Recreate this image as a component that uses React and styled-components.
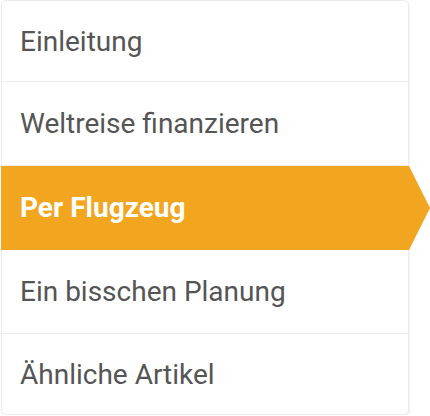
import React from "react";
import styled, { createGlobalStyle } from "styled-components";

const GlobalStyle = createGlobalStyle`
  html, body {
    margin: 0;
    padding: 0;
    background: #ffffff;
  }
  body {
    font-family: Roboto, "Liberation Sans", Arial, sans-serif;
  }
`;

const Menu = styled.nav`
  margin-left: 1px;
  width: 408px;
  box-sizing: border-box;
  border: 1px solid #ececec;
  border-radius: 5px;
  box-shadow: 1px 1px 2px rgba(0, 0, 0, 0.06);
  background: #ffffff;
  display: flex;
  flex-direction: column;
`;

const Item = styled.a`
  position: relative;
  display: flex;
  align-items: center;
  box-sizing: border-box;
  height: 84px;
  border-bottom: 1px solid #ededed;
  font-size: 28px;
  color: ${(p) => (p.$active ? "#ffffff" : "#555555")};
  font-weight: ${(p) => (p.$active ? 700 : 400)};
  background: ${(p) => (p.$active ? "#f2a51e" : "transparent")};
  margin: ${(p) => (p.$active ? "0 -1px" : "0")};
  padding: 0 18px 0 ${(p) => (p.$active ? "19px" : "18px")};
  text-decoration: none;
  white-space: nowrap;

  &:first-child {
    height: 81px;
  }
  &:last-child {
    height: 80px;
    border-bottom: none;
  }

  ${(p) =>
    p.$active &&
    `
    border-bottom-color: #f2a51e;
    &::after {
      content: "";
      position: absolute;
      left: 100%;
      top: 0;
      width: 0;
      height: 0;
      border-top: 42px solid transparent;
      border-bottom: 42px solid transparent;
      border-left: 21px solid #f2a51e;
    }
  `}
`;

const items = [
  "Einleitung",
  "Weltreise finanzieren",
  "Per Flugzeug",
  "Ein bisschen Planung",
  "Ähnliche Artikel",
];

export default function App() {
  return (
    <>
      <GlobalStyle />
      <Menu>
        {items.map((label, i) => (
          <Item key={label} $active={i === 2}>
            {label}
          </Item>
        ))}
      </Menu>
    </>
  );
}
